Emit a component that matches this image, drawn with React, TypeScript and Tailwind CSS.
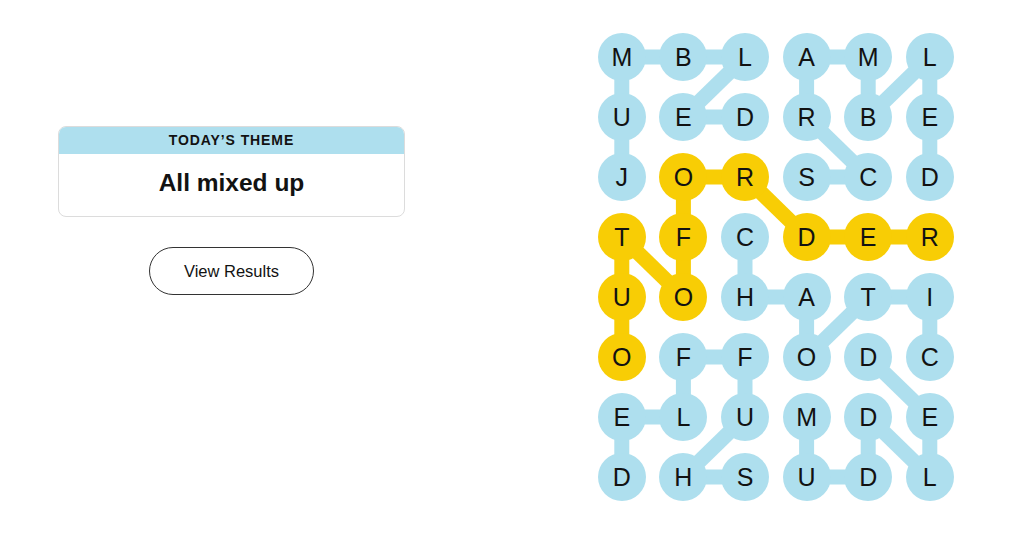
import React from "react";

const GRID = [
  "MBLAML",
  "UEDRBE",
  "JORSCD",
  "TFCDER",
  "UOHATI",
  "OFFODC",
  "ELUMDE",
  "DHSUDL",
];

const YELLOW = new Set(["2-1", "2-2", "3-0", "3-1", "3-3", "3-4", "3-5", "4-0", "4-1", "5-0"]);

type Edge = [number, number, number, number];

const BLUE_EDGES: Edge[] = [
  [0, 0, 0, 1], [0, 1, 0, 2], [0, 2, 1, 1], [1, 1, 1, 2], [0, 0, 1, 0], [1, 0, 2, 0],
  [0, 3, 0, 4], [0, 3, 1, 3], [1, 3, 2, 4], [2, 3, 2, 4], [0, 4, 1, 4], [1, 4, 0, 5], [0, 5, 1, 5], [1, 5, 2, 5],
  [3, 2, 4, 2], [4, 2, 4, 3], [4, 3, 5, 3], [5, 3, 4, 4], [4, 4, 4, 5], [4, 5, 5, 5],
  [5, 1, 5, 2], [5, 1, 6, 1], [6, 1, 6, 0], [6, 0, 7, 0], [5, 2, 6, 2], [6, 2, 7, 1], [7, 1, 7, 2],
  [5, 4, 6, 5], [6, 5, 7, 5], [7, 5, 6, 4], [6, 4, 7, 4], [7, 4, 7, 3], [7, 3, 6, 3],
];

const YELLOW_EDGES: Edge[] = [
  [5, 0, 4, 0], [4, 0, 3, 0], [3, 0, 4, 1], [4, 1, 3, 1], [3, 1, 2, 1], [2, 1, 2, 2], [2, 2, 3, 3], [3, 3, 3, 4], [3, 4, 3, 5],
];

const CW = 61.6;
const CH = 60;
const cx = (c: number) => CW / 2 + c * CW;
const cy = (r: number) => CH / 2 + r * CH;

function Board() {
  return (
    <div className="relative w-[369.6px] h-[480px]">
      <svg className="absolute inset-0" width="369.6" height="480" viewBox="0 0 369.6 480">
        {BLUE_EDGES.map(([r1, c1, r2, c2], i) => (
          <line key={"b" + i} x1={cx(c1)} y1={cy(r1)} x2={cx(c2)} y2={cy(r2)} stroke="#aedfee" strokeWidth={15} />
        ))}
        {YELLOW_EDGES.map(([r1, c1, r2, c2], i) => (
          <line key={"y" + i} x1={cx(c1)} y1={cy(r1)} x2={cx(c2)} y2={cy(r2)} stroke="#f8cd05" strokeWidth={15} />
        ))}
      </svg>
      <div className="relative grid grid-cols-[repeat(6,61.6px)] grid-rows-[repeat(8,60px)]">
        {GRID.map((row, r) =>
          row.split("").map((ch, c) => (
            <div key={`${r}-${c}`} className="flex items-center justify-center">
              <div
                className={
                  "w-[48px] h-[48px] rounded-full flex items-center justify-center text-[25px] text-[#121212] leading-none " +
                  (YELLOW.has(`${r}-${c}`) ? "bg-[#f8cd05]" : "bg-[#aedfee]")
                }
              >
                {ch}
              </div>
            </div>
          ))
        )}
      </div>
    </div>
  );
}

export default function App() {
  return (
    <div className="w-[1024px] h-[544px] bg-white flex font-['Liberation_Sans',Arial,sans-serif]">
      <div className="pl-[58px] pt-[126px] w-[405px] shrink-0 flex flex-col items-center">
        <div className="w-[347px] rounded-lg border border-[#dcdcdc] overflow-hidden">
          <div className="h-[27px] bg-[#aedfee] flex items-center justify-center text-[14px] font-bold tracking-[0.9px] text-[#121212]">
            TODAY’S THEME
          </div>
          <div className="h-[62px] flex items-center justify-center text-[24.5px] font-bold text-[#121212] pb-[3px]">
            All mixed up
          </div>
        </div>
        <button className="mt-[30px] w-[165px] h-[48px] rounded-full border border-[#333] text-[16.5px] text-[#121212] flex items-center justify-center">
          View Results
        </button>
      </div>
      <div className="pl-[186px] pt-[27px]">
        <Board />
      </div>
    </div>
  );
}
